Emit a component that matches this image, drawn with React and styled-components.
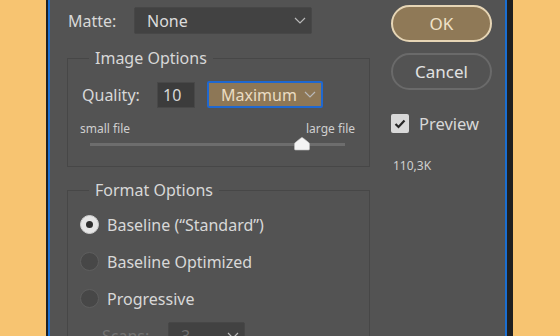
import React, { useState } from 'react';
import styled, { createGlobalStyle } from 'styled-components';

const GlobalStyle = createGlobalStyle`
    body {
        margin: 0;
        background: #f7c471;
        overflow: hidden;
        font-family: "Noto Sans", "Open Sans", sans-serif;
    }
`

const Page = styled.div`
    height: 336px;
    padding-left: 46px;
    overflow: hidden;
`
const Frame = styled.div`
    width: 467px;
    height: 100%;
    box-sizing: border-box;
    background: #1f1f1f;
    padding: 0 6px 0 2px;
`
const Panel = styled.div`
    height: 100%;
    box-sizing: border-box;
    border-left: 2px solid #1b6fd2;
    border-right: 2px solid #1b6fd2;
    background: #535353;
    display: flex;
    padding: 5px 0 0 17px;
    color: #d8d8d8;
    font-size: 16px;
`
const LeftCol = styled.div`
    width: 303px;
    flex-shrink: 0;
`
const RightCol = styled.div`
    width: 101px;
    margin-left: 21px;
    display: flex;
    flex-direction: column;
`
const MatteRow = styled.div`
    display: flex;
    align-items: center;
    height: 27px;
    margin-top: 2px;
`
const Label = styled.span`
    width: ${p => p.$width}px;
    padding-left: ${p => p.$indent || 0}px;
    box-sizing: border-box;
    color: ${p => (p.$disabled ? '#727272' : '#d8d8d8')};
    white-space: nowrap;
`
const Select = styled.div`
    width: ${p => p.$width}px;
    height: 27px;
    box-sizing: border-box;
    display: flex;
    align-items: center;
    justify-content: space-between;
    padding: 0 5px 0 ${p => p.$pad || 12}px;
    border: ${p => (p.$focus ? '2px solid #1f68d0' : '1px solid #474747')};
    border-radius: 2px;
    background: ${p => (p.$accent ? '#8d7756' : '#424242')};
    color: ${p => (p.$disabled ? '#6e6e6e' : p.$accent ? '#eadcc2' : '#dcdcdc')};
`
const Group = styled.fieldset`
    margin: ${p => p.$top}px 0 0;
    padding: 0 14px ${p => p.$bottom || 0}px 12px;
    border: 1px solid #474747;
    min-width: 0;
`
const Legend = styled.legend`
    margin-left: 9px;
    padding: 0 6px;
    line-height: 20px;
    color: #d8d8d8;
`
const QualityRow = styled.div`
    display: flex;
    align-items: center;
    height: 27px;
    margin-top: 13px;
    padding-left: 2px;
`
const NumberBox = styled.div`
    width: 38px;
    height: 26px;
    box-sizing: border-box;
    border: 1px solid #484848;
    background: #3c3c3c;
    padding-left: 5px;
    line-height: 24px;
    margin-right: 12px;
`
const SliderLabels = styled.div`
    display: flex;
    justify-content: space-between;
    margin-top: 13px;
    font-size: 12px;
    line-height: 16px;
    color: #cfcfcf;
`
const Track = styled.div`
    position: relative;
    height: 3px;
    margin: 6px 10px 0 10px;
    background: #6d6d6d;
`
const Thumb = styled.svg`
    position: absolute;
    top: -6px;
    margin-left: -8px;
`
const RadioList = styled.div`
    display: flex;
    flex-direction: column;
    gap: 18px;
    margin-top: 15px;
`
const RadioRow = styled.label`
    display: flex;
    align-items: center;
    gap: 8px;
    height: 19px;
    color: #d8d8d8;
`
const RadioDot = styled.span`
    width: 19px;
    height: 19px;
    box-sizing: border-box;
    border-radius: 50%;
    display: flex;
    align-items: center;
    justify-content: center;
    background: ${p => (p.$on ? '#e6e6e6' : '#474747')};
    border: 1px solid ${p => (p.$on ? '#cfcfcf' : '#5e5e5e')};
    &::after {
        content: '';
        display: ${p => (p.$on ? 'block' : 'none')};
        width: 7px;
        height: 7px;
        border-radius: 50%;
        background: #2f2f2f;
    }
`
const ScansRow = styled.div`
    display: flex;
    align-items: center;
    margin-top: 14px;
    padding-left: 22px;
`
const Button = styled.button`
    height: 37px;
    border-radius: 19px;
    font-family: inherit;
    font-size: 17px;
    padding: 0;
    margin-bottom: 11px;
    border: 2px solid ${p => (p.$primary ? '#e6d5b5' : '#6a6a6a')};
    background: ${p => (p.$primary ? '#8f7957' : 'transparent')};
    color: ${p => (p.$primary ? '#efe2c8' : '#e2e2e2')};
`
const CheckRow = styled.label`
    display: flex;
    align-items: center;
    gap: 10px;
    margin-top: 11px;
    font-size: 16.5px;
`
const CheckBox = styled.span`
    width: 18px;
    height: 19px;
    border-radius: 2px;
    background: #d9d9d9;
    display: flex;
    align-items: center;
    justify-content: center;
`
const SizeText = styled.div`
    margin-top: 24px;
    padding-left: 2px;
    font-size: 12px;
    line-height: 14px;
    color: #cfcfcf;
`

const Chevron = () => (
    <svg width="12" height="7" viewBox="0 0 12 7">
        <path d="M1 1 L6 6 L11 1" fill="none" stroke="#b9b9b9" strokeWidth="1.2" />
    </svg>
)

const formats = ['Baseline (\u201cStandard\u201d)', 'Baseline Optimized', 'Progressive'];

const App = () => {
    const [format, setFormat] = useState(0);
    const quality = 10;
    const thumbPos = 83; // percent along the slider

    return (
        <Page>
            <GlobalStyle />
            <Frame>
                <Panel>
                    <LeftCol>
                        <MatteRow>
                            <Label $width={67} $indent={1}>Matte:</Label>
                            <Select $width={178}>None<Chevron /></Select>
                        </MatteRow>

                        <Group $top={14} $bottom={20}>
                            <Legend>Image Options</Legend>
                            <QualityRow>
                                <Label $width={75}>Quality:</Label>
                                <NumberBox>{quality}</NumberBox>
                                <Select $width={116} $accent $focus $pad={12}>Maximum<Chevron /></Select>
                            </QualityRow>
                            <SliderLabels>
                                <span>small file</span>
                                <span>large file</span>
                            </SliderLabels>
                            <Track>
                                <Thumb width="16" height="14" viewBox="0 0 16 14" style={{ left: `${thumbPos}%` }}>
                                    <path d="M1.5 13 L14.5 13 Q15.5 13 15.5 12 L15.5 7 Q15.5 6 14.5 5.3 L8.8 0.8 Q8 0.2 7.2 0.8 L1.5 5.3 Q0.5 6 0.5 7 L0.5 12 Q0.5 13 1.5 13 Z" fill="#f4f4f4" stroke="#bdbdbd" strokeWidth="0.6" />
                                </Thumb>
                            </Track>
                        </Group>

                        <Group $top={13}>
                            <Legend>Format Options</Legend>
                            <RadioList>
                                {formats.map((f, i) => (
                                    <RadioRow key={f} onClick={() => setFormat(i)}>
                                        <RadioDot $on={format === i} />
                                        {f}
                                    </RadioRow>
                                ))}
                            </RadioList>
                            <ScansRow>
                                <Label $width={66} $disabled>Scans:</Label>
                                <Select $width={77} $disabled>3<Chevron /></Select>
                            </ScansRow>
                        </Group>
                    </LeftCol>

                    <RightCol>
                        <Button $primary>OK</Button>
                        <Button>Cancel</Button>
                        <CheckRow>
                            <CheckBox>
                                <svg width="12" height="10" viewBox="0 0 12 10">
                                    <path d="M1.5 5 L4.5 8 L10.5 1.5" fill="none" stroke="#262626" strokeWidth="2.2" />
                                </svg>
                            </CheckBox>
                            Preview
                        </CheckRow>
                        <SizeText>110,3K</SizeText>
                    </RightCol>
                </Panel>
            </Frame>
        </Page>
    );
}

export default App;
